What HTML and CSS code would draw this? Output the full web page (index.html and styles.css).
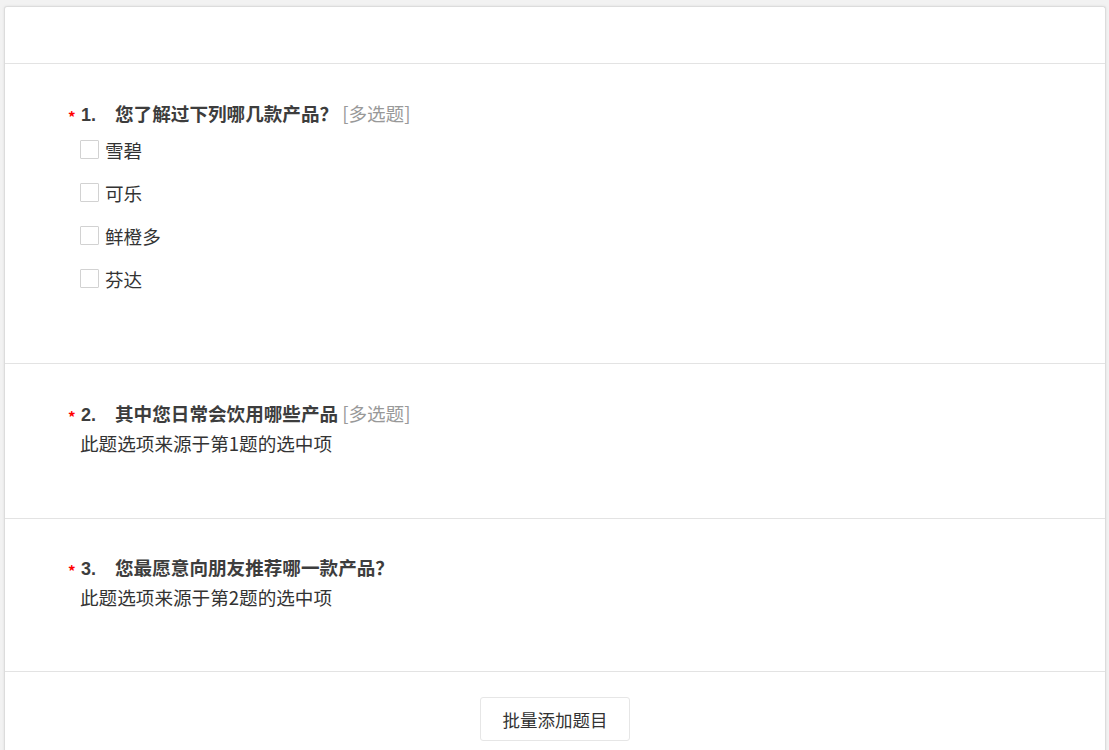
FILE: index.html
```html
<!DOCTYPE html>
<html lang="zh-CN">
<head>
    <meta charset="UTF-8">
    <meta name="viewport" content="width=device-width, initial-scale=1.0">
    <title>问卷编辑</title>
    <link rel="stylesheet" href="styles.css">
</head>
<body>
<div class="page">
    <div class="card">
        <div class="card-head"></div>

        <div class="question question-first">
            <div class="q-title">
                <span class="star">*</span>
                <span class="num">1.</span>
                <span class="q-text">您了解过下列哪几款产品？</span>
                <span class="q-type">[多选题]</span>
            </div>
            <div class="q-body">
                <label class="option"><span class="box"></span>雪碧</label>
                <label class="option"><span class="box"></span>可乐</label>
                <label class="option"><span class="box"></span>鲜橙多</label>
                <label class="option"><span class="box"></span>芬达</label>
            </div>
        </div>

        <div class="question">
            <div class="q-title">
                <span class="star">*</span>
                <span class="num">2.</span>
                <span class="q-text">其中您日常会饮用哪些产品</span>
                <span class="q-type">[多选题]</span>
            </div>
            <div class="q-body">
                <p class="q-desc">此题选项来源于第1题的选中项</p>
            </div>
        </div>

        <div class="question question-last">
            <div class="q-title">
                <span class="star">*</span>
                <span class="num">3.</span>
                <span class="q-text">您最愿意向朋友推荐哪一款产品？</span>
            </div>
            <div class="q-body">
                <p class="q-desc">此题选项来源于第2题的选中项</p>
            </div>
        </div>

        <div class="card-foot">
            <button class="btn-batch">批量添加题目</button>
        </div>
    </div>
</div>
</body>
</html>
```

FILE: styles.css
```css
:root {
    --page-bg: #f2f2f2;
    --line-color: #e3e3e3;
    --text-color: #333;
    --title-color: #3d3d3d;
}
body {
    margin: 0;
    background-color: var(--page-bg);
    font-family: "Noto Sans CJK SC", "Liberation Sans", sans-serif;
    color: var(--text-color);
    height: 750px;
    overflow: hidden;
}
.page {
    padding: 6px 3px 0 4px;
}
.card {
    background-color: #fff;
    border: 1px solid #dcdcdc;
    border-bottom: none;
    border-radius: 3px 3px 0 0;
    box-shadow: 0 0 3px rgba(0, 0, 0, 0.08);
    min-height: 760px;
}
.card-head {
    height: 56px;
    border-bottom: 1px solid var(--line-color);
}
.question {
    padding: 34px 0 60px 63px;
    border-bottom: 1px solid var(--line-color);
}
.question-first {
    padding-top: 34px;
    padding-bottom: 63px;
}
.question-last {
    padding-top: 33px;
    padding-bottom: 59px;
}
.q-title {
    display: flex;
    align-items: baseline;
    height: 30px;
    line-height: 30px;
    font-size: 18.6px;
    color: var(--title-color);
}
.star {
    width: 13px;
    color: #f00;
    font-size: 15px;
    font-weight: bold;
    position: relative;
    top: 2px;
}
.num {
    width: 34px;
    font-weight: bold;
    font-size: 18px;
    font-family: "Liberation Sans", "Noto Sans CJK SC", sans-serif;
}
.q-text {
    font-weight: bold;
}
.q-type {
    margin-left: 4px;
    color: #999;
}
.q-body {
    padding-left: 12px;
}
.option {
    display: flex;
    align-items: center;
    height: 43px;
    font-size: 18.6px;
}
.box {
    width: 19px;
    height: 19px;
    box-sizing: border-box;
    border: 1px solid #d2d2d2;
    border-radius: 1px;
    margin-right: 6px;
}
.q-desc {
    margin: 0;
    line-height: 30px;
    font-size: 18.6px;
}
.card-foot {
    padding-top: 25px;
    display: flex;
    justify-content: center;
}
.btn-batch {
    width: 150px;
    height: 44px;
    background-color: #fff;
    border: 1px solid #e6e6e6;
    border-radius: 3px;
    font-family: inherit;
    font-size: 17.5px;
    color: var(--text-color);
    cursor: pointer;
}
```
